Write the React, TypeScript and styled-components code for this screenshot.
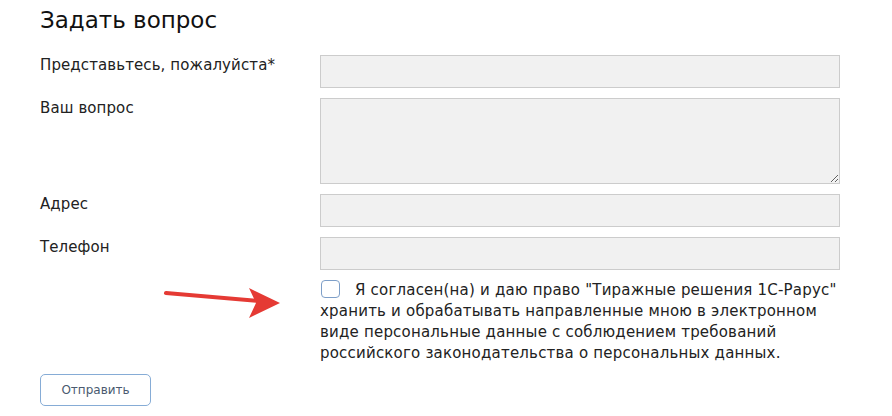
import React from 'react';
import styled, { createGlobalStyle } from 'styled-components';

const GlobalStyle = createGlobalStyle`
  body {
    margin: 0;
    background: #fff;
    font-family: 'DejaVu Sans', 'Liberation Sans', sans-serif;
    color: #222;
  }
`;

const Page = styled.div`
  position: relative;
  padding: 4px 0 0 40px;
  width: 800px;
`;

const Title = styled.h2`
  margin: 0 0 19px;
  font-size: 23px;
  font-weight: normal;
  line-height: 32px;
  color: #111;
`;

const Form = styled.form`
  display: grid;
  grid-template-columns: 280px 520px;
  row-gap: 10px;
`;

const Label = styled.label`
  padding-top: 1px;
  font-size: 15px;
  line-height: 18px;
  letter-spacing: 0.1px;
  color: #222;
`;

const Input = styled.input`
  box-sizing: border-box;
  width: 100%;
  height: 33px;
  margin: 0;
  border: 1px solid #cccccc;
  background: #f1f1f1;
  outline: none;
`;

const TextArea = styled.textarea`
  box-sizing: border-box;
  width: 100%;
  height: 86px;
  margin: 0;
  border: 1px solid #cccccc;
  background: #f1f1f1;
  outline: none;
  display: block;
`;

const Consent = styled.label`
  grid-column: 2;
  margin-top: 0;
  font-size: 15px;
  line-height: 21px;
  letter-spacing: 0.2px;
  color: #222;
`;

const Check = styled.span`
  display: inline-block;
  box-sizing: border-box;
  width: 19px;
  height: 18px;
  margin: 0 15px -3px 1px;
  border: 1.5px solid #7e9fc8;
  border-radius: 4px;
  background: #fff;
`;

const Actions = styled.div`
  grid-column: 1 / span 2;
  padding-top: 0;
`;

const SubmitButton = styled.button`
  box-sizing: border-box;
  width: 111px;
  height: 32px;
  border: 1px solid #86acd6;
  border-radius: 5px;
  background: #fff;
  font-family: inherit;
  font-size: 12px;
  color: #4a5a70;
`;

const Arrow = styled.svg`
  position: absolute;
  left: 160px;
  top: 284px;
`;

export default function App() {
  return (
    <Page>
      <GlobalStyle />
      <Title>Задать вопрос</Title>
      <Form onSubmit={(e) => e.preventDefault()}>
        <Label>Представьтесь, пожалуйста*</Label>
        <Input />
        <Label>Ваш вопрос</Label>
        <TextArea />
        <Label>Адрес</Label>
        <Input />
        <Label>Телефон</Label>
        <Input />
        <Consent>
          <Check />
          Я согласен(на) и даю право "Тиражные решения 1С-Рарус" хранить и обрабатывать
          направленные мною в электронном виде персональные данные с соблюдением требований
          российского законодательства о персональных данных.
        </Consent>
        <Actions>
          <SubmitButton type="submit">Отправить</SubmitButton>
        </Actions>
      </Form>
      <Arrow width="130" height="40" viewBox="0 0 130 40">
        <line x1="6" y1="9" x2="100" y2="17" stroke="#e53a34" strokeWidth="4" strokeLinecap="round" />
        <polygon points="89,4 120,19 89,34 96,19" fill="#e53a34" />
      </Arrow>
    </Page>
  );
}
